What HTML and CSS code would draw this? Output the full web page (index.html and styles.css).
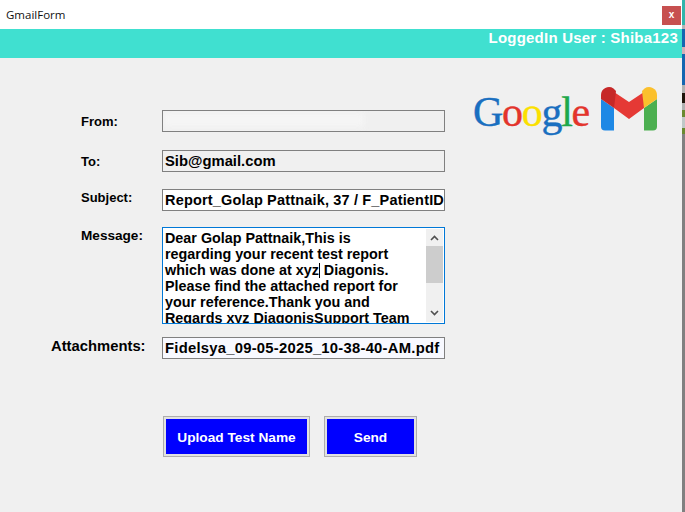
FILE: index.html
```html
<!DOCTYPE html>
<html lang="en">
<head>
<meta charset="utf-8">
<title>GmailForm</title>
<link rel="stylesheet" href="styles.css">
</head>
<body>
<div class="desktop">
  <div class="window">
    <header class="titlebar">
      <span class="title">GmailForm</span>
      <button class="close">x</button>
    </header>
    <div class="userbar">LoggedIn User : Shiba123</div>
    <main class="content">
      <div class="form-area">
        <form class="form">
          <div class="row row-from">
            <label class="label">From:</label>
            <div class="field field-readonly"><span class="blur"></span></div>
          </div>
          <div class="row row-to">
            <label class="label">To:</label>
            <div class="field field-readonly">Sib@gmail.com</div>
          </div>
          <div class="row row-subject">
            <label class="label label-raised">Subject:</label>
            <div class="field field-white">Report_Golap Pattnaik, 37 / F_PatientID</div>
          </div>
          <div class="row row-message">
            <label class="label label-top">Message:</label>
            <div class="message">
              <div class="message-text">Dear Golap Pattnaik,This is<br>regarding your recent test report<br>which was done at xyz<span class="caret"></span> Diagonis.<br>Please find the attached report for<br>your reference.Thank you and<br>Regards xyz DiagonisSupport Team</div>
              <div class="scrollbar">
                <svg class="arrow" viewBox="0 0 9 6" width="9" height="6"><path d="M1 5l3.500-3.500L8 5" fill="none" stroke="#505050" stroke-width="1.600"/></svg>
                <div class="track"><div class="thumb"></div></div>
                <svg class="arrow" viewBox="0 0 9 6" width="9" height="6"><path d="M1 1l3.500 3.500L8 1" fill="none" stroke="#505050" stroke-width="1.600"/></svg>
              </div>
            </div>
          </div>
          <div class="row row-attach">
            <label class="label label-wide">Attachments:</label>
            <div class="field field-pale">Fidelsya_09-05-2025_10-38-40-AM.pdf</div>
          </div>
          <div class="actions">
            <button type="button" class="btn btn-upload">Upload Test Name</button>
            <button type="button" class="btn btn-send">Send</button>
          </div>
        </form>
        <div class="logos">
          <div class="google"><span class="blue">G</span><span class="red">o</span><span class="yellow">o</span><span class="blue">g</span><span class="green">l</span><span class="red">e</span></div>
          <svg class="gmail" viewBox="0 0 56 44" width="56" height="44">
            <path d="M0 12V39.500A4 4 0 0 0 4 43.500H13V21Z" fill="#1e88e5"/>
            <path d="M56 12V39.500A4 4 0 0 1 52 43.500H43V21Z" fill="#4caf50"/>
            <path d="M13 5L28 15 43 5V21L28 32 13 21Z" fill="#e53935"/>
            <path d="M0 12V8A8 8 0 0 1 12.500 1.500L15 4 13 21Z" fill="#c62828"/>
            <path d="M56 12V8A8 8 0 0 0 43.500 1.500L41 4 43 21Z" fill="#fbc02d"/>
          </svg>
        </div>
      </div>
    </main>
  </div>
  <div class="backdrop">
    <span class="strip b-teal"></span><span class="strip b-gray"></span><span class="strip b-blue1"></span><span class="strip b-pink"></span><span class="strip b-blue2"></span><span class="strip b-gray2"></span><span class="strip b-dark"></span><span class="strip b-gray3"></span><span class="strip b-olive"></span><span class="strip b-light"></span><span class="strip b-olive2"></span>
  </div>
</div>
</body>
</html>
```
FILE: styles.css
```css
* { box-sizing: border-box; }
html, body { margin: 0; height: 100%; }
body { overflow: hidden; font-family: "Liberation Sans", Arial, sans-serif; color: #000; }
.desktop { display: flex; width: 685px; height: 512px; }
.window { width: 682px; height: 512px; display: flex; flex-direction: column; background: #f0f0f0; }
.titlebar { height: 29px; background: #fff; display: flex; align-items: center; justify-content: space-between; padding: 0 1px 0 6px; flex: none; }
.title { font-family: "Open Sans", "Liberation Sans", sans-serif; font-size: 11.500px; color: #111; margin-top: -1px; }
.close { width: 19px; height: 19px; margin-top: 2px; border: 0; padding: 0 0 2px; background: #c75050; color: #fff; font: bold 10px "Liberation Sans", sans-serif; }
.userbar { height: 29px; flex: none; background: #40e0d0; color: #fff; font-weight: bold; font-size: 15px; letter-spacing: 0.220px; text-align: right; padding: 0 4px 0 0; line-height: 18px; }
.content { flex: 1; }
.form-area { position: relative; height: 100%; }
.form { display: flex; flex-direction: column; padding-top: 52px; }
.row { display: flex; align-items: center; }
.row-to { margin-top: 18px; }
.row-subject { margin-top: 17px; }
.row-message { margin-top: 16px; align-items: flex-start; }
.row-attach { margin-top: 13px; }
.label { width: 162px; padding-left: 81px; font-size: 13px; font-weight: bold; flex: none; }
.label-raised { margin-top: -6px; }
.label-top { margin-top: 1px; font-size: 13.600px; }
.label-wide { padding-left: 51px; margin-top: -5px; font-size: 14.800px; }
.field { width: 283px; height: 22px; border: 1px solid #808080; font-size: 14.800px; font-weight: bold; line-height: 21px; padding-left: 2px; white-space: nowrap; overflow: hidden; }
.field-readonly { background: #f0f0f0; }
.field-white { background: #fff; font-size: 14.500px; letter-spacing: 0.170px; }
.field-pale { background: #f8f9ff; font-size: 14.800px; letter-spacing: 0.250px; line-height: 20px; }
.blur { display: block; width: 200px; height: 14px; margin: 2px 0 0 -1px; background: #f5f5f5; filter: blur(3px); }
.message { width: 283px; height: 97px; border: 1px solid #0078d7; background: #fff; display: flex; overflow: hidden; }
.message-text { flex: 1; padding: 2px 0 0 2px; font-size: 14.350px; font-weight: bold; line-height: 16px; white-space: nowrap; }
.caret { display: inline-block; width: 1px; height: 15px; background: #000; vertical-align: -3px; }
.scrollbar { width: 17px; margin: 1px 1px 1px 0; background: #f0f0f0; display: flex; flex-direction: column; align-items: center; flex: none; }
.arrow { flex: none; margin: 6px 0; }
.track { flex: 1; width: 100%; margin: -1px 0; }
.thumb { width: 100%; height: 37px; background: #cdcdcd; }
.actions { display: flex; gap: 14px; margin: 57px 0 0 163px; }
.btn { height: 41px; border: 1px solid #adadad; background: #00f; box-shadow: inset 0 0 0 2px #e1e1e1; color: #fff; font: bold 13.700px "Liberation Sans", sans-serif; padding: 1px 0 0; }
.btn-upload { width: 147px; }
.btn-send { width: 93px; }
.logos { position: absolute; left: 473px; top: 29px; display: flex; align-items: flex-start; gap: 12px; }
.google { font-family: "Liberation Serif", serif; font-size: 42px; line-height: 48px; letter-spacing: -1.300px; margin-top: 1px; -webkit-text-stroke: 0.400px currentColor; }
.blue { color: #1a6fc0; }
.red { color: #e3342c; }
.yellow { color: #fbe000; }
.green { color: #1ea84b; }
.gmail { display: block; flex: none; }
.backdrop { width: 3px; height: 512px; display: flex; flex-direction: column; flex: none; background: #808080; }
.strip { display: block; flex: none; }
.b-teal { background: #2fb5ab; height: 25px; }
.b-gray { background: #b5b5b5; height: 4px; }
.b-blue1 { background: #1565b0; height: 18px; }
.b-pink { background: #d0b0b8; height: 7px; }
.b-blue2 { background: #1565b0; height: 31px; }
.b-gray2 { background: #b0b0b0; height: 8px; }
.b-dark { background: #20140a; height: 10px; }
.b-gray3 { background: #b0b0b0; height: 7px; }
.b-olive { background: #6a8a30; height: 7px; }
.b-light { background: #c0c8c8; height: 11px; }
.b-olive2 { background: #6a8a30; height: 6px; }
```
